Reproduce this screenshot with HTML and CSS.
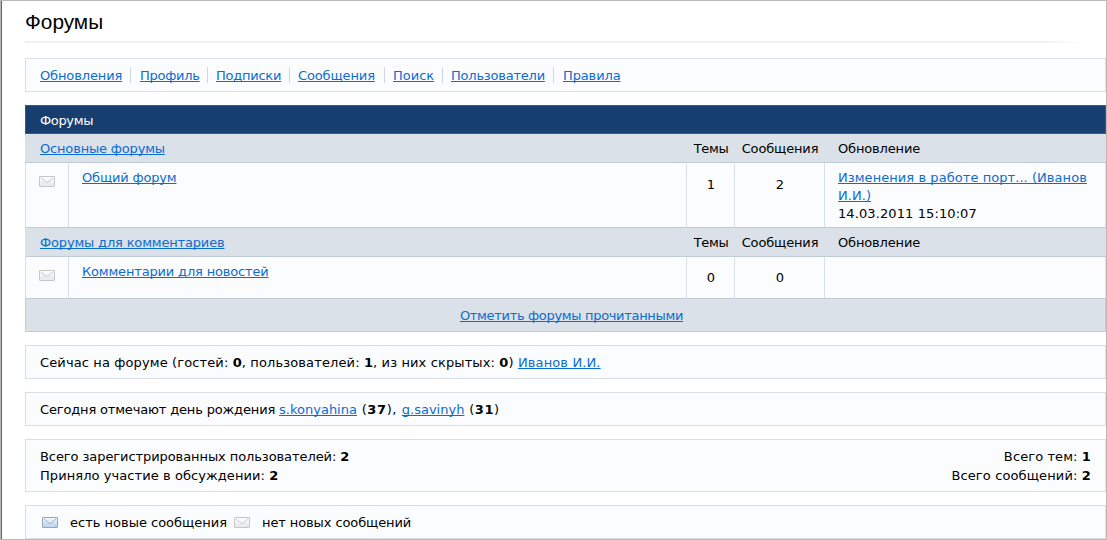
FILE: index.html
```
<!DOCTYPE html>
<html lang="ru">
<head>
<meta charset="utf-8">
<title>Форумы</title>
<link rel="stylesheet" href="styles.css">
</head>
<body>
<svg class="defs" width="0" height="0" aria-hidden="true">
  <defs>
    <linearGradient id="blue" x1="0" y1="0" x2="0" y2="1"><stop offset="0" stop-color="#f4f9ff"/><stop offset="1" stop-color="#bcd2ea"/></linearGradient>
    <linearGradient id="grey" x1="0" y1="0" x2="0" y2="1"><stop offset="0" stop-color="#fdfdfd"/><stop offset="1" stop-color="#e9e9e9"/></linearGradient>
  </defs>
</svg>
<main class="page">
  <h1 class="title">Форумы</h1>
  <div class="rule"></div>
  <nav class="box menu">
    <span class="item w1"><a href="#">Обновления</a></span>
    <span class="item w2"><a href="#">Профиль</a></span>
    <span class="item w3"><a href="#">Подписки</a></span>
    <span class="item w4"><a href="#">Сообщения</a></span>
    <span class="item w5"><a href="#">Поиск</a></span>
    <span class="item w6"><a href="#">Пользователи</a></span>
    <span class="item w7"><a href="#">Правила</a></span>
  </nav>

  <section class="forums">
    <h2 class="caption">Форумы</h2>
    <div class="row head">
      <div class="group"><a href="#">Основные форумы</a></div>
      <div class="num topics">Темы</div><div class="num">Сообщения</div><div class="last">Обновление</div>
    </div>
    <div class="row body tall">
      <div class="mark"><svg class="mail" width="16" height="11" viewBox="0 0 16 11"><rect x=".5" y=".5" width="15" height="10" rx=".5" fill="url(#grey)" stroke="#c6c6c6"/><path d="M1.8 1.8L7.2 6.4h1.6l5.4-4.6" fill="none" stroke="#c8c8c8"/><path d="M2 9l3-2.5M14 9l-3-2.5" fill="none" stroke="#dedede" stroke-width=".8"/></svg></div>
      <div class="name"><a href="#">Общий форум</a></div>
      <div class="num">1</div><div class="num">2</div>
      <div class="last"><a class="topic" href="#">Изменения в работе порт... (Иванов<br>И.И.)</a><br><span class="date">14.03.2011 15:10:07</span></div>
    </div>
    <div class="row head">
      <div class="group"><a href="#">Форумы для комментариев</a></div>
      <div class="num topics">Темы</div><div class="num">Сообщения</div><div class="last">Обновление</div>
    </div>
    <div class="row body short">
      <div class="mark"><svg class="mail" width="16" height="11" viewBox="0 0 16 11"><rect x=".5" y=".5" width="15" height="10" rx=".5" fill="url(#grey)" stroke="#c6c6c6"/><path d="M1.8 1.8L7.2 6.4h1.6l5.4-4.6" fill="none" stroke="#c8c8c8"/><path d="M2 9l3-2.5M14 9l-3-2.5" fill="none" stroke="#dedede" stroke-width=".8"/></svg></div>
      <div class="name"><a href="#">Комментарии для новостей</a></div>
      <div class="num">0</div><div class="num">0</div><div class="last"></div>
    </div>
    <div class="foot"><a href="#">Отметить форумы прочитанными</a></div>
  </section>

  <div class="box online">Сейчас на форуме (гостей: <b>0</b>, пользователей: <b>1</b>, из них скрытых: <b>0</b>) <a href="#">Иванов И.И.</a></div>
  <div class="box birthday"><span class="lead">Сегодня отмечают день рождения </span><a href="#">s.konyahina</a><span class="age"> (<b>37</b>), </span><a href="#">g.savinyh</a><span class="age"> (<b>31</b>)</span></div>
  <div class="box stats">
    <div><span class="s1">Всего зарегистрированных пользователей: <b>2</b></span><br><span class="s2">Приняло участие в обсуждении: <b>2</b></span></div>
    <div class="right"><span class="s3">Всего тем: <b>1</b></span><br><span class="s4">Всего сообщений: <b>2</b></span></div>
  </div>
  <div class="box legend">
    <svg class="mail" width="16" height="11" viewBox="0 0 16 11"><rect x=".5" y=".5" width="15" height="10" rx=".5" fill="url(#blue)" stroke="#8ea6c6"/><path d="M1.8 1.8L7.2 6.4h1.6l5.4-4.6" fill="none" stroke="#94aecb"/><path d="M2 9l3-2.5M14 9l-3-2.5" fill="none" stroke="#b4c9e0" stroke-width=".8"/></svg>
    <span class="l1">есть новые сообщения</span>
    <svg class="mail" width="16" height="11" viewBox="0 0 16 11"><rect x=".5" y=".5" width="15" height="10" rx=".5" fill="url(#grey)" stroke="#c6c6c6"/><path d="M1.8 1.8L7.2 6.4h1.6l5.4-4.6" fill="none" stroke="#c8c8c8"/><path d="M2 9l3-2.5M14 9l-3-2.5" fill="none" stroke="#dedede" stroke-width=".8"/></svg>
    <span class="l2">нет новых сообщений</span>
  </div>
</main>
</body>
</html>
```
FILE: styles.css
```
* { box-sizing: border-box; }
body { margin: 0; background: #fff; color: #000; font: 13px/18px Verdana, "DejaVu Sans", sans-serif; white-space: nowrap; }
a { color: #0c6ccf; text-decoration: underline; text-decoration-thickness: 1px; text-underline-offset: 1px; text-decoration-skip-ink: none; }
.defs { display: block; }
.page { height: 540px; overflow: hidden; border: 1px solid #b9b9b9; box-shadow: inset 1px 0 #666; padding-left: 24px; }
.title { margin: 0; height: 40px; padding-top: 8px; font: 20.8px/26px "Liberation Sans", Arial, sans-serif; }
.rule { height: 2px; width: 1060px; background: linear-gradient(to right, #f1f1f1 96%, #fff); }
.box { margin-top: 13px; height: 34px; border: 1px solid #d9dfe7; background: #fbfcfe; padding: 8px 14px; }
.menu { margin-top: 15px; display: flex; }
.item { height: 16px; line-height: 18px; letter-spacing: -.13px; }
.item + .item { border-left: 1px solid #cfd8e2; padding-left: 9px; }
.item + .item.w3, .item + .item.w4, .item + .item.w5, .item + .item.w6 { padding-left: 8px; }
.w1 { width: 90px; }
.w2 { width: 77px; letter-spacing: -.27px; }
.w3 { width: 82px; letter-spacing: -.25px; }
.w4 { width: 95px; }
.w5 { width: 58px; letter-spacing: 0; }
.w6 { width: 111px; letter-spacing: -.22px; }
.w7 { width: 80px; }
.forums { margin-top: 13px; }
.caption { margin: 0; height: 29px; background: #163f70; border: 1px solid #34598a; color: #fff; font-size: 13px; font-weight: normal; line-height: 27px; letter-spacing: -.35px; padding: 1px 14px 0; }
.row { display: grid; border: solid #c2ccd8; border-width: 0 0 1px; }
.head { grid-template-columns: 661px 48px 90px 1fr; height: 29px; background: #dae1e9; line-height: 30px; letter-spacing: -.15px; }
.group { padding-left: 15px; letter-spacing: -.17px; }
.head .num { text-align: center; padding-left: 2px; }
.head .topics { letter-spacing: -.35px; }
.head .last { padding-left: 14px; }
.body { background: #fbfcfe; border-left: 1px solid #d9dfe7; border-right: 1px solid #d9dfe7; }
.body.row { grid-template-columns: 42px 618px 48px 90px 1fr; }
.body > div + div { border-left: 1px solid #d9e0e9; }
.tall { height: 65px; }
.short { height: 42px; }
.mark { padding: 13px 0 0 13px; }
.mail { display: block; flex: none; }
.name { padding: 6px 0 0 13px; letter-spacing: -.17px; }
.body .num { text-align: center; padding: 13px 0 0 1px; }
.short .num { padding-top: 12px; }
.body .last { padding: 6px 0 0 13px; }
.topic { letter-spacing: .06px; }
.date { letter-spacing: .1px; }
.foot { height: 33px; background: #dae1e9; border: solid #c2ccd8; border-width: 0 1px 1px; text-align: center; line-height: 34px; letter-spacing: -.32px; padding-left: 12px; }
.online { letter-spacing: .12px; }
.lead { letter-spacing: -.16px; }
.age { letter-spacing: .6px; }
.stats { height: 53px; display: flex; justify-content: space-between; line-height: 19px; padding-top: 7px; }
.s1 { letter-spacing: -.08px; }
.s2 { letter-spacing: .07px; }
.s3 { letter-spacing: .1px; }
.s4 { letter-spacing: .13px; }
.right { text-align: right; }
.legend { display: flex; align-items: center; padding-left: 16px; }
.l1, .l2 { padding-top: 1px; line-height: 19px; }
.l1 { margin: 0 7px 0 12px; width: 157px; }
.l2 { margin-left: 12px; letter-spacing: -.1px; }
```
